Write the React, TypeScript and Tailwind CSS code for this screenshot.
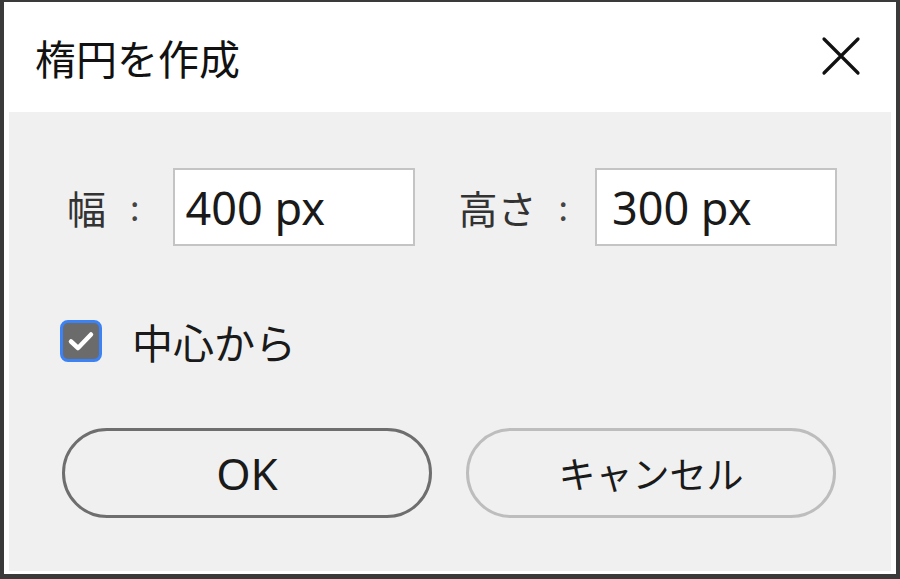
import React from "react";

const jp = { fontFamily: '"Noto Sans CJK JP", "Noto Sans", sans-serif' };
const lat = { fontFamily: '"Noto Sans", "Noto Sans CJK JP", sans-serif' };

export default function App() {
  return (
    <div className="w-[900px] h-[579px] bg-[#3a3a3a] pt-[2px] px-[4px] pb-[5px] flex flex-col" style={jp}>
      <div className="flex-1 bg-white flex flex-col px-[5px] pb-[3px]">
        <div className="h-[110px] flex items-center justify-between pl-[26px] pr-[30px] shrink-0">
          <span className="text-[41px] text-[#111] leading-none" style={jp}>楕円を作成</span>
          <svg width="40" height="40" viewBox="0 0 40 40" className="mt-[-2px]">
            <path d="M3 3 L37 37 M37 3 L3 37" stroke="#111" strokeWidth="3.2" strokeLinecap="round" />
          </svg>
        </div>
        <div className="flex-1 bg-[#f0f0f0] flex flex-col">
          <div className="flex items-center mt-[56px] pl-[58px] h-[78px]">
            <span className="text-[39px] text-[#333] leading-none">幅</span>
            <span className="text-[34px] text-[#444] leading-none ml-[24px] mr-[34px]">:</span>
            <div className="w-[242px] h-[78px] bg-white border-2 border-[#c4c4c4] flex items-center pl-[10px]">
              <span className="text-[45px] text-[#1a1a1a] leading-none" style={lat}>400 px</span>
            </div>
            <span className="text-[39px] text-[#333] leading-none ml-[43px]">高さ</span>
            <span className="text-[34px] text-[#444] leading-none ml-[22px] mr-[27px]">:</span>
            <div className="w-[242px] h-[78px] bg-white border-2 border-[#c4c4c4] flex items-center pl-[15px]">
              <span className="text-[45px] text-[#1a1a1a] leading-none" style={lat}>300 px</span>
            </div>
          </div>
          <div className="flex items-center mt-[74px] pl-[51px] h-[42px]">
            <div className="w-[42px] h-[42px] rounded-[8px] border-[3px] border-[#3b82f6] bg-[#6b6b6b] flex items-center justify-center">
              <svg width="28" height="28" viewBox="0 0 28 28">
                <path d="M4 14.5 L11 21 L24 7.5" stroke="white" strokeWidth="4.5" fill="none" strokeLinecap="round" strokeLinejoin="round" />
              </svg>
            </div>
            <span className="text-[41px] text-[#1a1a1a] leading-none ml-[30px]">中心から</span>
          </div>
          <div className="flex items-center mt-[66px] pl-[53px] gap-[34px]">
            <button className="w-[370px] h-[90px] rounded-full border-[3px] border-[#6e6e6e] bg-[#f0f0f0] flex items-center justify-center">
              <span className="text-[44px] text-[#1a1a1a] leading-none" style={lat}>OK</span>
            </button>
            <button className="w-[370px] h-[90px] rounded-full border-[3px] border-[#bdbdbd] bg-[#f0f0f0] flex items-center justify-center">
              <span className="text-[37px] text-[#1a1a1a] leading-none">キャンセル</span>
            </button>
          </div>
        </div>
      </div>
    </div>
  );
}
